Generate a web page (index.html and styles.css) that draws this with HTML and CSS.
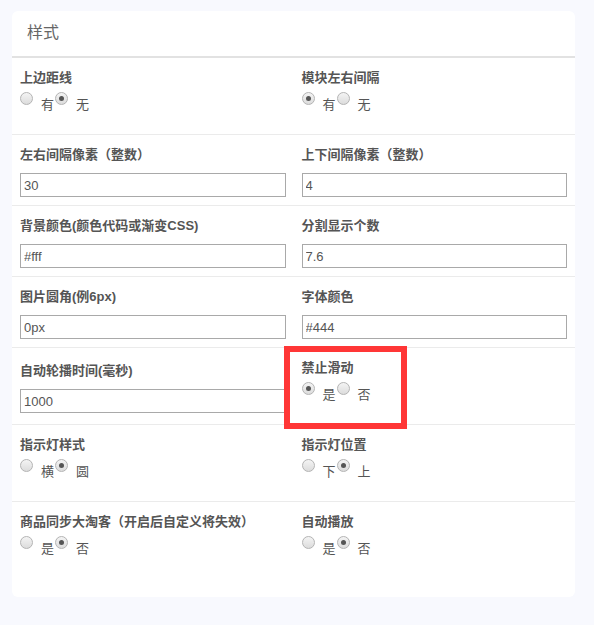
FILE: index.html
```html
<!DOCTYPE html>
<html lang="zh-CN">
<head>
    <meta charset="UTF-8">
    <meta name="viewport" content="width=device-width, initial-scale=1.0">
    <title>样式</title>
    <link rel="stylesheet" href="styles.css">
</head>
<body>

    <div class="panel">
        <div class="panel-title">样式</div>

        <div class="row">
            <div class="cell">
                <div class="label">上边距线</div>
                <div class="choices">
                    <input type="radio" name="topLine"><span>有</span>
                    <input type="radio" name="topLine" checked><span>无</span>
                </div>
            </div>
            <div class="cell">
                <div class="label">模块左右间隔</div>
                <div class="choices">
                    <input type="radio" name="sideGap" checked><span>有</span>
                    <input type="radio" name="sideGap"><span>无</span>
                </div>
            </div>
        </div>

        <div class="row">
            <div class="cell">
                <div class="label">左右间隔像素（整数）</div>
                <input type="text" class="field" value="30">
            </div>
            <div class="cell">
                <div class="label">上下间隔像素（整数）</div>
                <input type="text" class="field" value="4">
            </div>
        </div>

        <div class="row">
            <div class="cell">
                <div class="label">背景颜色(颜色代码或渐变CSS)</div>
                <input type="text" class="field" value="#fff">
            </div>
            <div class="cell">
                <div class="label">分割显示个数</div>
                <input type="text" class="field" value="7.6">
            </div>
        </div>

        <div class="row">
            <div class="cell">
                <div class="label">图片圆角(例6px)</div>
                <input type="text" class="field" value="0px">
            </div>
            <div class="cell">
                <div class="label">字体颜色</div>
                <input type="text" class="field" value="#444">
            </div>
        </div>

        <div class="row centered">
            <div class="cell">
                <div class="label">自动轮播时间(毫秒)</div>
                <input type="text" class="field" value="1000">
            </div>
            <div class="cell marked">
                <div class="label">禁止滑动</div>
                <div class="choices">
                    <input type="radio" name="noSwipe" checked><span>是</span>
                    <input type="radio" name="noSwipe"><span>否</span>
                </div>
                <div class="highlight"></div>
            </div>
        </div>

        <div class="row">
            <div class="cell">
                <div class="label">指示灯样式</div>
                <div class="choices">
                    <input type="radio" name="dotStyle"><span>横</span>
                    <input type="radio" name="dotStyle" checked><span>圆</span>
                </div>
            </div>
            <div class="cell">
                <div class="label">指示灯位置</div>
                <div class="choices">
                    <input type="radio" name="dotPos"><span>下</span>
                    <input type="radio" name="dotPos" checked><span>上</span>
                </div>
            </div>
        </div>

        <div class="row last">
            <div class="cell">
                <div class="label">商品同步大淘客（开启后自定义将失效）</div>
                <div class="choices">
                    <input type="radio" name="sync"><span>是</span>
                    <input type="radio" name="sync" checked><span>否</span>
                </div>
            </div>
            <div class="cell">
                <div class="label">自动播放</div>
                <div class="choices">
                    <input type="radio" name="autoplay"><span>是</span>
                    <input type="radio" name="autoplay" checked><span>否</span>
                </div>
            </div>
        </div>
    </div>

</body>
</html>
```

FILE: styles.css
```css
body {
    margin: 0;
    padding: 11px 19px 28px 12px;
    background-color: #f8f9fe;
    font-family: 'Liberation Sans', 'Noto Sans CJK SC', sans-serif;
    color: #555;
}
.panel {
    background-color: #ffffff;
    border-radius: 6px;
    padding-bottom: 19px;
}
.panel-title {
    height: 45px;
    line-height: 44px;
    padding: 0 15px;
    font-size: 16px;
    color: #666;
    border-bottom: 2px solid #e2e2e2;
}
.row {
    display: flex;
    border-bottom: 1px solid #ebebeb;
}
.row.centered {
    align-items: center;
}
.row.last {
    border-bottom: none;
}
.cell {
    flex: 1;
    min-width: 0;
    padding: 10px 8px 8px 8px;
}
.label {
    font-size: 13px;
    font-weight: bold;
    line-height: 20px;
    color: #555;
    white-space: nowrap;
}
.field {
    display: block;
    box-sizing: border-box;
    width: 100%;
    height: 24px;
    margin: 8px 0 0 0;
    padding: 0 3px;
    border: 1px solid #a9a9a9;
    border-radius: 0;
    font-family: 'Liberation Sans', sans-serif;
    font-size: 13px;
    color: #555;
    outline: none;
}
.choices {
    display: flex;
    align-items: flex-start;
    height: 34px;
    margin-top: 4px;
}
.choices span {
    font-size: 13px;
    line-height: 14px;
    margin-top: 6px;
    color: #555;
}
.choices input[type="radio"] {
    appearance: none;
    -webkit-appearance: none;
    width: 13px;
    height: 13px;
    margin: 0 8px 0 0;
    border: 1px solid #b4b4b4;
    border-radius: 50%;
    box-sizing: border-box;
    background: linear-gradient(#f4f4f4, #dcdcdc);
    position: relative;
}
.choices span + input[type="radio"] {
    margin-left: 1px;
}
.choices input[type="radio"]:checked::after {
    content: '';
    position: absolute;
    left: 3px;
    top: 3px;
    width: 5px;
    height: 5px;
    border-radius: 50%;
    background-color: #555;
}
.marked {
    position: relative;
}
/* red annotation box drawn over the cell */
.highlight {
    position: absolute;
    left: -10px;
    top: -2px;
    width: 123px;
    height: 83px;
    box-sizing: border-box;
    border: 6px solid #ff3636;
    pointer-events: none;
}
```
